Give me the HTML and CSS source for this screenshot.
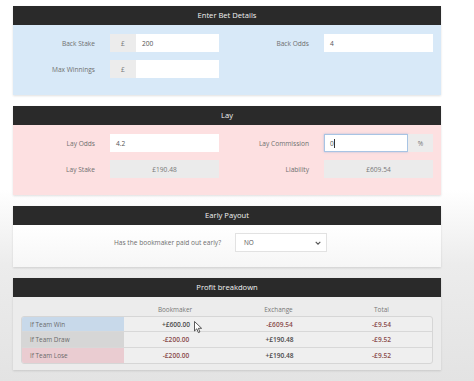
FILE: index.html
```html
<!DOCTYPE html>
<html>
<head>
<meta charset="utf-8">
<link rel="stylesheet" href="styles.css">
</head>
<body>
<div class="page">
  <section class="panel panel-blue">
    <div class="panel-head">Enter Bet Details</div>
    <div class="panel-body form-grid">
      <div class="lbl">Back Stake</div>
      <div class="group"><span class="addon">£</span><span class="ctl">200</span></div>
      <div class="lbl">Back Odds</div>
      <div class="group"><span class="ctl">4</span></div>
      <div class="lbl">Max Winnings</div>
      <div class="group"><span class="addon">£</span><span class="ctl"></span></div>
    </div>
  </section>

  <section class="panel panel-pink">
    <div class="panel-head">Lay</div>
    <div class="panel-body form-grid">
      <div class="lbl">Lay Odds</div>
      <div class="group"><span class="ctl">4.2</span></div>
      <div class="lbl">Lay Commission</div>
      <div class="group"><span class="ctl focus">0<span class="caret"></span></span><span class="addon addon-r">%</span></div>
      <div class="lbl">Lay Stake</div>
      <div class="group"><span class="ctl ro">£190.48</span></div>
      <div class="lbl">Liability</div>
      <div class="group"><span class="ctl ro">£609.54</span></div>
    </div>
  </section>

  <section class="panel panel-white">
    <div class="panel-head">Early Payout</div>
    <div class="panel-body early">
      <div class="lbl early-lbl">Has the bookmaker paid out early?</div>
      <div class="select"><span>NO</span>
        <svg class="chev" width="6" height="4" viewBox="0 0 6 4"><path d="M0.7 0.8 L3 3.1 L5.3 0.8" fill="none" stroke="#555" stroke-width="1.1"/></svg>
      </div>
    </div>
  </section>

  <section class="panel panel-gray">
    <div class="panel-head">Profit breakdown</div>
    <div class="panel-body profit">
      <div class="thead">
        <span></span><span>Bookmaker</span><span>Exchange</span><span>Total</span>
      </div>
      <div class="tbl">
        <div class="tr">
          <span class="name win">If Team Win</span>
          <span class="v">+£600.00</span><span class="v neg">-£609.54</span><span class="v neg">-£9.54</span>
        </div>
        <div class="tr">
          <span class="name draw">If Team Draw</span>
          <span class="v neg">-£200.00</span><span class="v">+£190.48</span><span class="v neg">-£9.52</span>
        </div>
        <div class="tr">
          <span class="name lose">If Team Lose</span>
          <span class="v neg">-£200.00</span><span class="v">+£190.48</span><span class="v neg">-£9.52</span>
        </div>
      </div>
    </div>
  </section>
</div>
<svg class="cursor" width="9" height="13" viewBox="0 0 9 13"><path d="M0.5 0.5 L0.5 10 L2.8 7.8 L4.4 11.6 L5.9 11 L4.4 7.3 L7.6 7.3 Z" fill="#fff" stroke="#333" stroke-width="0.8" stroke-linejoin="round"/></svg>
</body>
</html>
```

FILE: styles.css
```css
html, body {
  margin: 0;
  padding: 0;
}
body {
  width: 474px;
  height: 381px;
  overflow: hidden;
  position: relative;
  font-family: "Open Sans", "Liberation Sans", sans-serif;
  background: linear-gradient(to bottom, #ffffff 0px, #ffffff 190px, #ececec 265px, #e3e3e3 381px);
}
.page {
  padding: 6px 33px 0 13px;
  display: flex;
  flex-direction: column;
  gap: 11px;
}
.panel {
  width: 428px;
  box-shadow: 0 1px 2px rgba(0,0,0,0.12);
}
.panel-head {
  height: 19px;
  line-height: 19px;
  background: #2a2a2a;
  color: #f2f2f2;
  text-align: center;
  font-size: 7.6px;
}
.panel-blue .panel-body { background: #d8e9f8; }
.panel-pink .panel-body { background: #fde0e1; }
.panel-white .panel-body { background: linear-gradient(#ffffff, #f6f6f6); }
.panel-gray .panel-body { background: #ececec; }

.form-grid {
  display: grid;
  grid-template-columns: 97px 109px 105px 109px;
  grid-auto-rows: 18px;
  row-gap: 8px;
  padding: 9px 8px 17px 0;
  height: 44px;
}
.lbl {
  font-size: 6.6px;
  color: #6f6f6f;
  text-align: right;
  padding-right: 15px;
  align-self: center;
}
.group {
  display: flex;
  height: 18px;
}
.addon {
  width: 26px;
  background: #ececec;
  color: #777;
  font-size: 6.6px;
  display: flex;
  align-items: center;
  justify-content: center;
}
.addon-r { width: 25px; }
.ctl {
  flex: 1;
  background: #ffffff;
  font-size: 6.6px;
  color: #555;
  display: flex;
  align-items: center;
  padding-left: 6px;
  box-sizing: border-box;
}
.ctl.ro {
  background: #ebebeb;
  justify-content: center;
  padding-left: 0;
  color: #777;
}
.ctl.focus {
  border: 1px solid #a8c4e4;
  box-shadow: 0 0 2px rgba(102,150,210,0.5);
  padding-left: 5px;
}
.caret {
  display: inline-block;
  width: 1px;
  height: 9px;
  background: #333;
}

.early {
  height: 42px;
  box-sizing: border-box;
  padding-top: 8px;
  display: flex;
  align-items: flex-start;
}
.early-lbl {
  align-self: flex-start;
  width: 208px;
  box-sizing: border-box;
  padding-right: 0;
  height: 19px;
  line-height: 19px;
}
.select {
  margin-left: 14px;
  width: 92px;
  height: 19px;
  box-sizing: border-box;
  background: #fff;
  border: 1px solid #e2e2e2;
  display: flex;
  align-items: center;
  justify-content: space-between;
  padding: 0 5px 0 8px;
  font-size: 6.4px;
  color: #555;
}

.profit {
  height: 73px;
  box-sizing: border-box;
  padding: 6px 8px 0 8px;
}
.thead, .tr {
  display: grid;
  grid-template-columns: 102px 104px 103px 1fr;
}
.thead {
  height: 13px;
  font-size: 6.4px;
  color: #777;
  text-align: center;
  line-height: 13px;
}
.tbl {
  border: 1px solid #d6d6d6;
  border-radius: 3px;
  overflow: hidden;
  background: #efefef;
}
.tr {
  height: 15px;
  border-top: 1px solid #d8d8d8;
}
.tr:first-child { border-top: none; height: 14px; }
.name {
  font-size: 6.4px;
  color: #6a6a6a;
  padding-left: 8px;
  display: flex;
  align-items: center;
}
.win { background: #c8d9ea; }
.draw { background: #d6d6d6; }
.lose { background: #eaccd1; }
.v {
  font-size: 6.6px;
  font-weight: 600;
  color: #4a4a4a;
  display: flex;
  align-items: center;
  justify-content: center;
}
.v.neg { color: #8a4b4b; }

.cursor {
  position: absolute;
  left: 194px;
  top: 321px;
}
```
